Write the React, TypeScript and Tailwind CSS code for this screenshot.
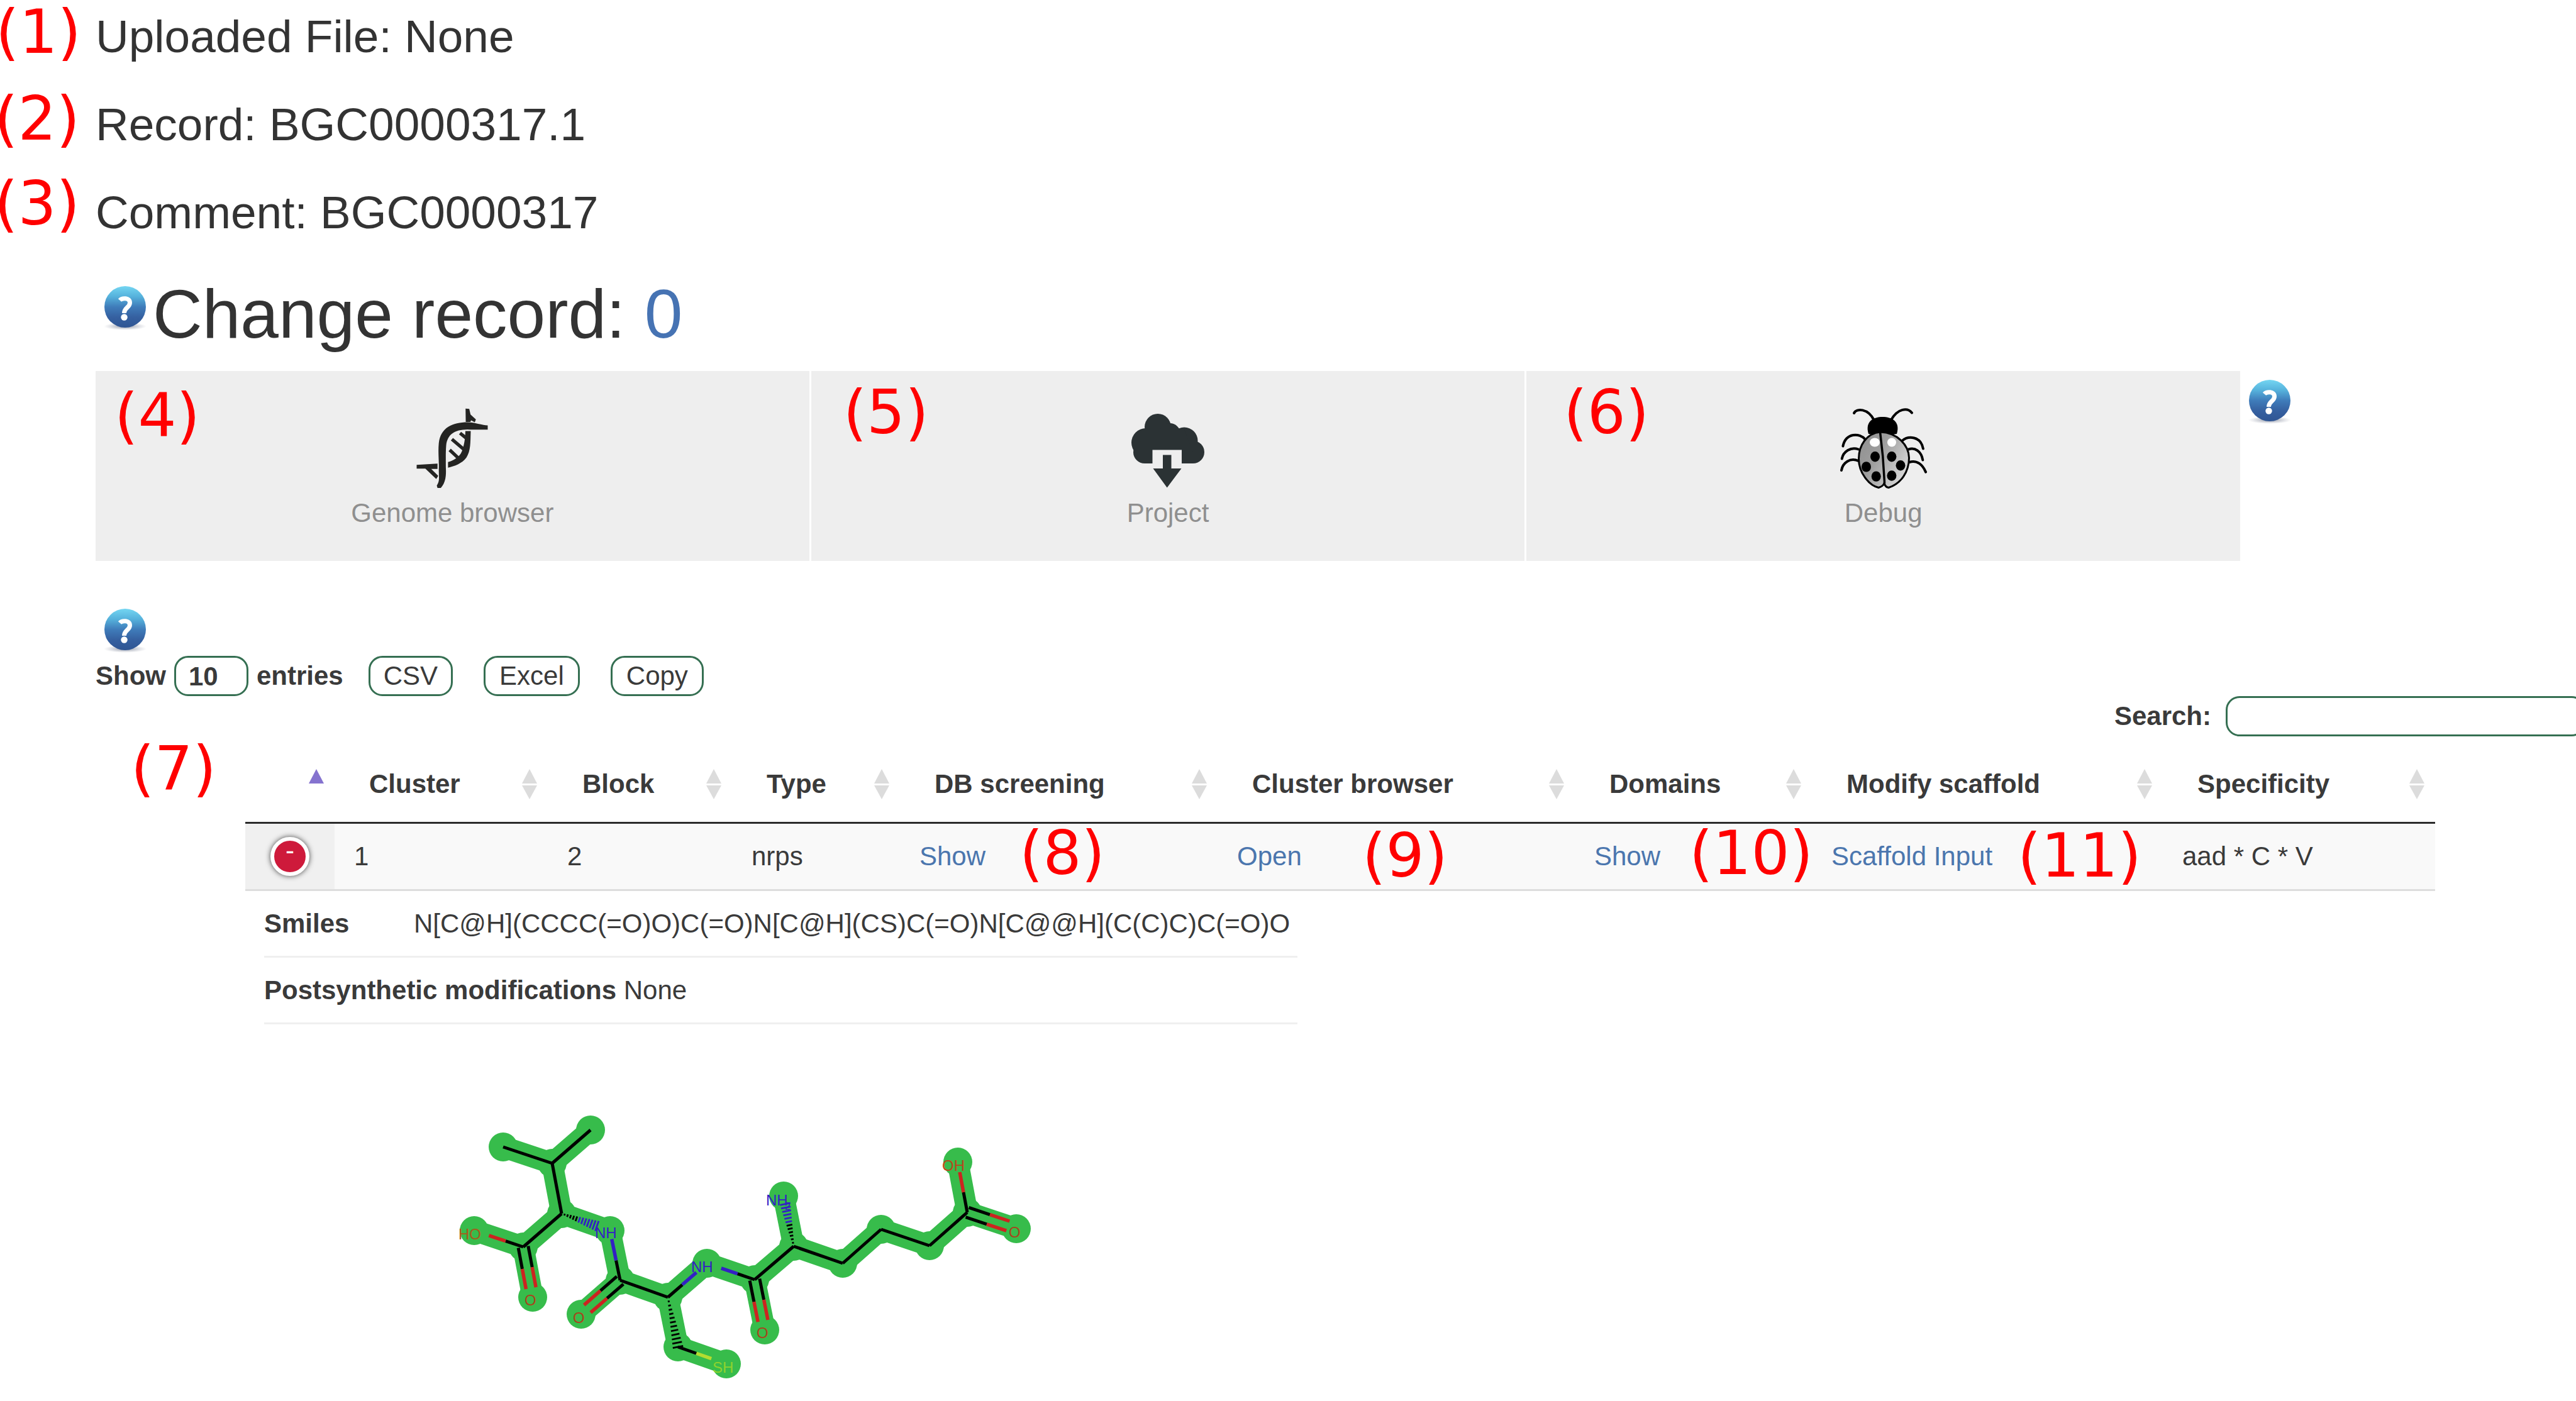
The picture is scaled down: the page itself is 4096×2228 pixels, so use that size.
import React from "react";

type Point = [number, number];

const FONT = "font-['Liberation_Sans',Arial,sans-serif]";

/* Red numbered marker laid over the part of the page it refers to. */
function Callout({ n, className }: { n: number; className: string }) {
  return (
    <span
      className={`pointer-events-none absolute whitespace-nowrap font-['DejaVu_Sans',sans-serif] text-[96px] leading-[96px] font-normal text-[#ff0000] ${className}`}
    >
      ({n})
    </span>
  );
}

function HelpIcon({ id, className = "" }: { id: string; className?: string }) {
  return (
    <button type="button" aria-label="Help" className={`shrink-0 ${className}`}>
      <svg width="91" height="87" viewBox="0 0 91 87">
        <defs>
          <linearGradient id={`${id}-fill`} x1="0" y1="0" x2="0" y2="1">
            <stop offset="0" stopColor="#74d6f2" />
            <stop offset="0.25" stopColor="#56b2dc" />
            <stop offset="0.5" stopColor="#3f7cba" />
            <stop offset="0.75" stopColor="#3560a0" />
            <stop offset="1" stopColor="#2f5593" />
          </linearGradient>
          <radialGradient id={`${id}-shade`}>
            <stop offset="0" stopColor="#55607a" stopOpacity="0.7" />
            <stop offset="1" stopColor="#8a90a0" stopOpacity="0" />
          </radialGradient>
        </defs>
        <ellipse cx="47" cy="76" rx="34" ry="6" fill={`url(#${id}-shade)`} />
        <circle cx="47" cy="45" r="33" fill={`url(#${id}-fill)`} />
        <path
          d="M38.5 34.5 C42 30.5 54.500 30 54.500 38.500 C54.500 46 45.500 46 45.500 55"
          fill="none"
          stroke="#fff"
          strokeWidth="7"
        />
        <circle cx="45.500" cy="61.500" r="5.200" fill="#fff" />
      </svg>
    </button>
  );
}

function DnaIcon() {
  return (
    <svg width="140" height="130" viewBox="109 107 477 443" fill="#242422">
      <path d="M540 204C505 203 470 187 430 187C350 187 285 215 275 300C270 350 277 400 275 440C275 490 281 505 264 530L268 543L286 543C311 515 316 480 313 430C313 380 312 350 315 312C322 252 360 227 430 226C470 228 500 227 540 227Z" />
      <path d="M420 113L440 115L447 145L476 172L470 187L450 177L446 185L421 185Z" />
      <path d="M419 235L448 235C446 300 448 340 425 378C400 412 360 425 325 433L325 403C358 394 388 375 400 345C412 312 418 280 419 235Z" />
      <path
        d="M390 246L422 272M346 279L410 334M334 337L386 386"
        fill="none"
        stroke="#242422"
        strokeWidth="18"
      />
      <path d="M155 418L268 411L268 440L234 440L272 478L261 495L202 438L155 438Z" />
    </svg>
  );
}

function CloudIcon() {
  return (
    <svg width="140" height="130" viewBox="0 0 140 130" fill="#2b3234">
      <circle cx="54" cy="31" r="21" />
      <circle cx="35" cy="56" r="23" />
      <circle cx="33" cy="71" r="18" />
      <circle cx="73" cy="42" r="17" />
      <circle cx="96" cy="53" r="21.500" />
      <circle cx="110" cy="71" r="18" />
      <path d="M33 35H96L110 71V89H33Z" />
      <rect x="45.500" y="67.500" width="46.500" height="24" fill="#eeeeee" />
      <path d="M62 75.500H75.500V97H91.500L68.700 127.500L46.500 97H62Z" />
    </svg>
  );
}

function BugIcon() {
  const spots: Point[] = [
    [56.5, 78.2],
    [82.9, 78.2],
    [42.5, 94.4],
    [97, 92.3],
    [58.2, 109.6],
    [82.9, 108.5],
  ];
  return (
    <svg width="140" height="130" viewBox="0 0 140 130">
      <defs>
        <linearGradient id="bug-shell" x1="0" y1="0" x2="1" y2="0.6">
          <stop offset="0" stopColor="#8f8f8f" />
          <stop offset="0.45" stopColor="#9d9d9d" />
          <stop offset="1" stopColor="#d6d6d6" />
        </linearGradient>
      </defs>
      <g fill="none" stroke="#000" strokeWidth="4" strokeLinecap="round">
        <path d="M23 9C27 1 45 1 54.800 20" />
        <path d="M115 8.500C108 0 93 1 81.800 20" />
        <path d="M41 51C32 40 10 40 5.400 61.500" />
        <path d="M30 66.500C18 62 6 70 3.700 81.500" />
        <path d="M30 85C17 79 5 88 3 100" />
        <path d="M99.800 52.700C109 45 129 45 132.900 65.500" />
        <path d="M110 66.500C120 63 130 70 132.300 83.500" />
        <path d="M111 87C123 83 132 91 137 102.600" />
      </g>
      <path d="M46 42C40 22 54 15 68.300 15C83 15 97 22 91 42L68 46Z" />
      <path
        d="M65 39C43 41 30.500 60 30.500 82C30.500 104 47 124 62 127.500C67 126 70 123 71 120.500C72 124 75 127 78 127.500C98 121 110.500 102 110.500 80C110 60 92 40 65 39Z"
        fill="url(#bug-shell)"
        stroke="#000"
        strokeWidth="3"
      />
      <path d="M64.500 39Q70 80 71.500 121" fill="none" stroke="#000" strokeWidth="3.500" />
      <ellipse cx="56" cy="55.500" rx="8" ry="7" fill="#fff" />
      <ellipse cx="83" cy="55.500" rx="7" ry="7" fill="#fff" />
      {spots.map(([x, y]) => (
        <ellipse key={`${x}-${y}`} cx={x} cy={y} rx="7.500" ry="8.200" />
      ))}
    </svg>
  );
}

function SortIcon({ active = false }: { active?: boolean }) {
  return (
    <svg width="24" height="48" viewBox="0 0 24 48" className="shrink-0">
      <path d="M12 0L24 23H0Z" fill={active ? "#8573cf" : "#dcdcdc"} />
      {!active && <path d="M0 26H24L12 48Z" fill="#dcdcdc" />}
    </svg>
  );
}

/* ---- Molecule ---- */

const ATOMS: Record<string, Point> = {
  me1: [800, 1824],
  me2: [939, 1797],
  iso: [878, 1850],
  alpha1: [893, 1930],
  acid1: [832, 1983],
  ho1: [754, 1957],
  o1: [847, 2063],
  nh1: [970, 1957],
  amide1: [986, 2036],
  o2: [924, 2090],
  alpha2: [1062, 2063],
  nh2: [1124, 2009],
  ch2: [1078, 2142],
  sh: [1155, 2169],
  amide2: [1200, 2035],
  o3: [1216, 2115],
  alpha3: [1262, 1982],
  nh3: [1246, 1902],
  c1: [1340, 2009],
  c2: [1401, 1955],
  c3: [1478, 1981],
  acid2: [1538, 1928],
  ho2: [1523, 1848],
  o4: [1616, 1954],
};

const BLUE = "#3320c4";
const RED = "#cc2420";
const YELLOW = "#b4dc30";

type Bond = {
  from: string;
  to: string;
  kind?: "single" | "double" | "hash";
  split?: number;
  end?: number;
  tint?: string;
};

const BONDS: Bond[] = [
  { from: "me1", to: "iso" },
  { from: "me2", to: "iso" },
  { from: "iso", to: "alpha1" },
  { from: "alpha1", to: "acid1" },
  { from: "acid1", to: "ho1", split: 0.36, end: 0.7, tint: RED },
  { from: "acid1", to: "o1", kind: "double", split: 0.42, end: 0.82, tint: RED },
  { from: "alpha1", to: "nh1", kind: "hash", split: 0.34, end: 0.73, tint: BLUE },
  { from: "amide1", to: "nh1", split: 0.4, end: 0.83, tint: BLUE },
  { from: "amide1", to: "o2", kind: "double", split: 0.42, end: 0.84, tint: RED },
  { from: "amide1", to: "alpha2" },
  { from: "alpha2", to: "nh2", split: 0.37, end: 0.73, tint: BLUE },
  { from: "alpha2", to: "ch2", kind: "hash", split: 1, end: 1 },
  { from: "ch2", to: "sh", split: 0.38, end: 0.69, tint: YELLOW },
  { from: "amide2", to: "nh2", split: 0.36, end: 0.7, tint: BLUE },
  { from: "amide2", to: "o3", kind: "double", split: 0.42, end: 0.82, tint: RED },
  { from: "amide2", to: "alpha3" },
  { from: "alpha3", to: "nh3", kind: "hash", split: 0.42, end: 0.84, tint: BLUE },
  { from: "alpha3", to: "c1" },
  { from: "c1", to: "c2" },
  { from: "c2", to: "c3" },
  { from: "c3", to: "acid2" },
  { from: "acid2", to: "ho2", split: 0.4, end: 0.8, tint: RED },
  { from: "acid2", to: "o4", kind: "double", split: 0.43, end: 0.83, tint: RED },
];

const LABELS: { text: string; at: Point; tint: string }[] = [
  { text: "HO", at: [729, 1971], tint: "#a85a1c" },
  { text: "O", at: [834, 2076], tint: "#a8441c" },
  { text: "O", at: [911, 2104], tint: "#a8441c" },
  { text: "NH", at: [946, 1969], tint: BLUE },
  { text: "NH", at: [1099, 2023], tint: BLUE },
  { text: "O", at: [1203, 2128], tint: "#a8441c" },
  { text: "SH", at: [1133, 2183], tint: "#8ed22e" },
  { text: "NH", at: [1218, 1917], tint: BLUE },
  { text: "OH", at: [1498, 1862], tint: "#b8461c" },
  { text: "O", at: [1604, 1968], tint: "#a8441c" },
];

function BondShape({ from, to, kind = "single", split, end = 1, tint = "#000" }: Bond) {
  const [ax, ay] = ATOMS[from];
  const [bx, by] = ATOMS[to];
  const dx = bx - ax;
  const dy = by - ay;
  const len = Math.hypot(dx, dy);
  const nx = -dy / len;
  const ny = dx / len;
  const at = (t: number, off: number): Point => [ax + dx * t + nx * off, ay + dy * t + ny * off];
  const line = (p: Point, q: Point, color: string, width: number, key: string) => (
    <line key={key} x1={p[0]} y1={p[1]} x2={q[0]} y2={q[1]} stroke={color} strokeWidth={width} />
  );

  if (kind === "hash") {
    const count = 12;
    return (
      <>
        {Array.from({ length: count }, (_, i) => {
          const t = ((i + 1) / count) * end;
          const half = 1.5 + (i / count) * 7.5;
          return line(at(t, half), at(t, -half), t > (split ?? 1) ? tint : "#000", 2.8, `h${i}`);
        })}
      </>
    );
  }

  const offsets = kind === "double" ? [8, -8] : [0];
  return (
    <>
      {offsets.map((off) => (
        <React.Fragment key={off}>
          {line(at(0, off), at(split ?? end, off), "#000", 5, "a")}
          {split !== undefined && line(at(split, off), at(end, off), tint, 5.5, "b")}
        </React.Fragment>
      ))}
    </>
  );
}

function Molecule() {
  return (
    <svg
      role="img"
      aria-label="Structure of the peptide"
      width="930"
      height="460"
      viewBox="720 1760 930 460"
    >
      <g stroke="#37bc4b" strokeWidth="34" strokeLinecap="round">
        {BONDS.map((b) => (
          <line
            key={`${b.from}-${b.to}`}
            x1={ATOMS[b.from][0]}
            y1={ATOMS[b.from][1]}
            x2={ATOMS[b.to][0]}
            y2={ATOMS[b.to][1]}
          />
        ))}
      </g>
      <g fill="#37bc4b">
        {Object.entries(ATOMS).map(([name, [x, y]]) => (
          <circle key={name} cx={x} cy={y} r="23" />
        ))}
      </g>
      <g strokeLinecap="butt">
        {BONDS.map((b) => (
          <BondShape key={`${b.from}-${b.to}`} {...b} />
        ))}
      </g>
      <g className={FONT} fontSize="24">
        {LABELS.map(({ text, at, tint }) => (
          <text key={`${at[0]}-${at[1]}`} x={at[0]} y={at[1]} fill={tint}>
            {text}
          </text>
        ))}
        <text x="1248" y="1924" fontSize="16" fill={BLUE}>
          2
        </text>
      </g>
    </svg>
  );
}

/* ---- Page parts ---- */

const INFO = ["Uploaded File: None", "Record: BGC0000317.1", "Comment: BGC0000317"];
const INFO_CALLOUTS = [
  "-left-[159px] -top-[15px]",
  "-left-[161px] -top-[17px]",
  "-left-[161px] -top-[22px]",
];

const TILES = [
  { label: "Genome browser", icon: <DnaIcon />, n: 4, pos: "left-[30px] top-[23px]" },
  { label: "Project", icon: <CloudIcon />, n: 5, pos: "left-[51px] top-[18px]" },
  { label: "Debug", icon: <BugIcon />, n: 6, pos: "left-[59px] top-[18px]" },
];

const COLUMNS = [
  { title: "", width: "w-[142px]" },
  { title: "Cluster", width: "w-[339px]" },
  { title: "Block", width: "w-[293px]" },
  { title: "Type", width: "w-[267px]" },
  { title: "DB screening", width: "w-[505px]" },
  { title: "Cluster browser", width: "w-[568px]" },
  { title: "Domains", width: "w-[377px]" },
  { title: "Modify scaffold", width: "w-[558px]" },
  { title: "Specificity", width: "w-[433px]" },
];

const CELLS: { text: string; link?: boolean; n?: number; pos?: string }[] = [
  { text: "1" },
  { text: "2" },
  { text: "nrps" },
  { text: "Show", link: true, n: 8, pos: "left-[190px] -top-px" },
  { text: "Open", link: true, n: 9, pos: "left-[230px] top-[3px]" },
  { text: "Show", link: true, n: 10, pos: "left-[182px] -top-px" },
  { text: "Scaffold Input", link: true, n: 11, pos: "left-[327px] top-[3px]" },
  { text: "aad * C * V" },
];

const CONTROL = "h-[64px] rounded-[22px] border-[3px] border-[#356f52] bg-white";

function ClusterTable() {
  return (
    <div className="relative mt-[15px] ml-[238px] mr-[224px]">
      <Callout n={7} className="-left-[182px] -top-[12px]" />
      <table className="w-full table-fixed border-separate border-spacing-0 text-left">
        <thead>
          <tr>
            {COLUMNS.map(({ title, width }, i) => (
              <th
                key={title}
                scope="col"
                aria-sort={i === 0 ? "ascending" : undefined}
                className={`border-b-[3px] border-[#2b2b2b] p-0 ${width}`}
              >
                <div className="flex h-[121px] items-center justify-between pr-[17px] pl-[55px]">
                  <span className="whitespace-nowrap">{title}</span>
                  <SortIcon active={i === 0} />
                </div>
              </th>
            ))}
          </tr>
        </thead>
        <tbody>
          <tr className="bg-[#f9f9f9]">
            <td className="border-b-[3px] border-[#dddddd] bg-[#f0f0f0] p-0">
              <div className="flex h-[104px] items-center justify-center">
                <button
                  type="button"
                  aria-label="Hide details"
                  className="flex h-[62px] w-[62px] justify-center rounded-full border-[6px] border-white bg-[#ce1a3b] leading-[32px] text-white shadow-[0_0_9px_#444]"
                >
                  -
                </button>
              </div>
            </td>
            {CELLS.map(({ text, link, n, pos }, i) => (
              <td key={i} className="border-b-[3px] border-[#dddddd] p-0">
                <div className="relative flex h-[104px] items-center pl-[31px] whitespace-nowrap">
                  {link ? (
                    <a href="#" className="text-[#4b76ae]">
                      {text}
                    </a>
                  ) : (
                    text
                  )}
                  {n && pos && <Callout n={n} className={pos} />}
                </div>
              </td>
            ))}
          </tr>
          <tr>
            <td colSpan={9} className="p-0 pl-[30px]">
              <table className="border-separate border-spacing-0">
                <tbody>
                  <tr className="h-[106px]">
                    <th
                      scope="row"
                      className="w-[238px] border-b-[3px] border-[#efefef] p-0 text-left"
                    >
                      Smiles
                    </th>
                    <td className="w-[1405px] border-b-[3px] border-[#efefef] p-0 whitespace-nowrap">
                      N[C@H](CCCC(=O)O)C(=O)N[C@H](CS)C(=O)N[C@@H](C(C)C)C(=O)O
                    </td>
                  </tr>
                  <tr className="h-[106px]">
                    <td colSpan={2} className="border-b-[3px] border-[#efefef] p-0">
                      <b className="font-bold">Postsynthetic modifications</b> None
                    </td>
                  </tr>
                </tbody>
              </table>
              <div className="mt-[131px] ml-[300px]">
                <Molecule />
              </div>
            </td>
          </tr>
        </tbody>
      </table>
    </div>
  );
}

export default function App() {
  return (
    <main
      className={`min-h-screen overflow-x-hidden bg-white pt-[18px] pl-[152px] text-[42px] leading-[60px] text-[#3a3a3a] ${FONT}`}
    >
      <header>
        <div className="flex flex-col gap-[60px]">
          {INFO.map((line, i) => (
            <h3 key={line} className="relative text-[73px] leading-[80px] text-[#333]">
              <Callout n={i + 1} className={INFO_CALLOUTS[i]} />
              {line}
            </h3>
          ))}
        </div>
        <div className="mt-[61px] flex items-start">
          <HelpIcon id="help-record" className="mt-[4px]" />
          <h1 className="text-[109px] leading-[120px] text-[#333]">
            Change record:{" "}
            <a href="#" className="text-[#4673b3]">
              0
            </a>
          </h1>
        </div>
      </header>

      <div className="mt-[31px] mr-[443px] flex items-start">
        <nav className="grid flex-1 grid-cols-3 gap-[3px]">
          {TILES.map(({ label, icon, n, pos }) => (
            <a
              key={label}
              href="#"
              className="relative flex flex-col items-center gap-[8px] bg-[#eeeeee] pt-[58px] pb-[46px] text-[#8f8f8f]"
            >
              <Callout n={n} className={pos} />
              {icon}
              <span>{label}</span>
            </a>
          ))}
        </nav>
        <HelpIcon id="help-tools" className="mt-[2px]" />
      </div>

      <section>
        <HelpIcon id="help-table" className="mt-[64px] block" />
        <div className="flex items-center">
          <label className="flex items-center font-bold">
            Show
            <select
              defaultValue="10"
              className={`mr-[13px] ml-[13px] w-[118px] appearance-none pl-[20px] font-bold ${CONTROL}`}
            >
              <option>10</option>
              <option>25</option>
              <option>50</option>
            </select>
            entries
          </label>
          <div className="ml-[40px] flex gap-[49px]">
            <button type="button" className={`flex items-center px-[21px] ${CONTROL}`}>
              CSV
            </button>
            <button type="button" className={`flex items-center px-[22px] ${CONTROL}`}>
              Excel
            </button>
            <button type="button" className={`flex items-center px-[22px] ${CONTROL}`}>
              Copy
            </button>
          </div>
        </div>
        <div className="-mr-[15px] flex justify-end">
          <label className="flex items-center font-bold">
            Search:
            <input type="search" className={`ml-[23px] w-[572px] px-[20px] ${CONTROL}`} />
          </label>
        </div>
        <ClusterTable />
      </section>
    </main>
  );
}
